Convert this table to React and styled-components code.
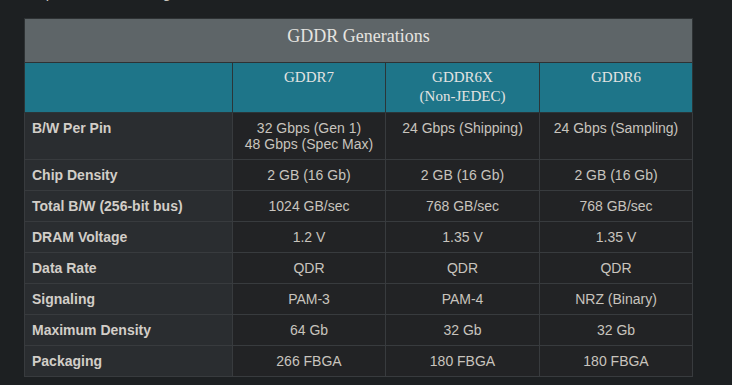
import React from 'react'
import styled, { createGlobalStyle } from 'styled-components'

const GlobalStyle = createGlobalStyle`
body {
  margin: 0;
  background: #1d2022;
  font-family: 'Liberation Sans', Arial, sans-serif;
}
`

const Page = styled.div`
width: 732px;
height: 385px;
overflow: hidden;
padding: 0 40px 0 24px;
box-sizing: border-box;
`

const Lead = styled.p`
margin: -18px 0 0;
height: 22px;
line-height: 22px;
font-size: 15px;
color: #c9c5bf;
white-space: nowrap;
overflow: hidden;
`

const Table = styled.table`
margin-top: 14px;
width: 668px;
border-collapse: collapse;
table-layout: fixed;
`

const Title = styled.th`
height: 44px;
box-sizing: border-box;
padding: 5px 0 0;
background: #5e6568;
color: #e6e4e0;
font-family: 'Liberation Serif', serif;
font-size: 18px;
line-height: 24px;
font-weight: 400;
text-align: center;
vertical-align: top;
border: 1px solid #2e3234;
`

const Head = styled.th`
height: 36px;
padding: 5px 6px 6px;
background: #1e7589;
color: #e4e4e2;
font-family: 'Liberation Serif', serif;
font-size: 15px;
line-height: 19px;
font-weight: 400;
text-align: center;
vertical-align: top;
border: 1px solid #2b3538;
`

const Label = styled.td`
padding: 7px 7px;
background: #2a2d30;
color: #d2cec8;
font-size: 14px;
font-weight: 700;
line-height: 16px;
vertical-align: top;
border: 1px solid #383b3e;
`

const Cell = styled.td`
padding: 7px 4px;
background: #222325;
color: #c8c4be;
font-size: 14px;
line-height: 16px;
text-align: center;
vertical-align: top;
border: 1px solid #383b3e;
`

const columns = [
  { name: 'GDDR7' },
  { name: 'GDDR6X', note: '(Non-JEDEC)' },
  { name: 'GDDR6' },
]

const rows = [
  ['B/W Per Pin', ['32 Gbps (Gen 1)', '48 Gbps (Spec Max)'], '24 Gbps (Shipping)', '24 Gbps (Sampling)'],
  ['Chip Density', '2 GB (16 Gb)', '2 GB (16 Gb)', '2 GB (16 Gb)'],
  ['Total B/W (256-bit bus)', '1024 GB/sec', '768 GB/sec', '768 GB/sec'],
  ['DRAM Voltage', '1.2 V', '1.35 V', '1.35 V'],
  ['Data Rate', 'QDR', 'QDR', 'QDR'],
  ['Signaling', 'PAM-3', 'PAM-4', 'NRZ (Binary)'],
  ['Maximum Density', '64 Gb', '32 Gb', '32 Gb'],
  ['Packaging', '266 FBGA', '180 FBGA', '180 FBGA'],
]

const renderValue = (value) =>
  Array.isArray(value)
    ? value.map((line, i) => <div key={i}>{line}</div>)
    : value

const App = () => {
  return (
    <Page>
      <GlobalStyle />
      <Lead>
        As per the last three generations of the standard, the table below sets out the numbers that matter most for each memory type.
      </Lead>
      <Table>
        <colgroup>
          <col style={{ width: 208 }} />
          <col style={{ width: 153 }} />
          <col style={{ width: 154 }} />
          <col style={{ width: 153 }} />
        </colgroup>
        <thead>
          <tr>
            <Title colSpan={4}>GDDR Generations</Title>
          </tr>
          <tr>
            <Head />
            {columns.map((c) => (
              <Head key={c.name}>
                {c.name}
                {c.note && <div>{c.note}</div>}
              </Head>
            ))}
          </tr>
        </thead>
        <tbody>
          {rows.map(([label, ...values]) => (
            <tr key={label}>
              <Label>{label}</Label>
              {values.map((v, i) => (
                <Cell key={i}>{renderValue(v)}</Cell>
              ))}
            </tr>
          ))}
        </tbody>
      </Table>
    </Page>
  )
}

export default App
